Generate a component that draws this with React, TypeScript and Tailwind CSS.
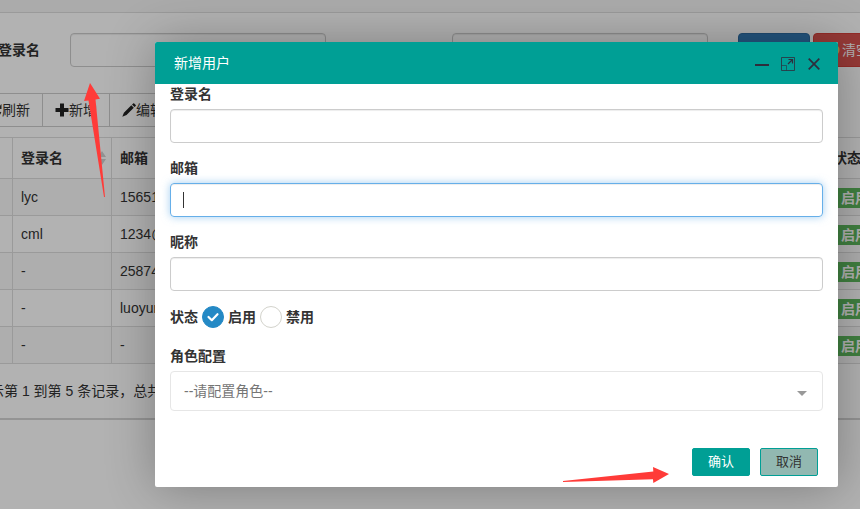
import type { ReactNode } from "react";

const rows = [
  { login: "lyc", email: "15651" },
  { login: "cml", email: "1234@" },
  { login: "-", email: "25874" },
  { login: "-", email: "luoyun" },
  { login: "-", email: "-" },
];

function ToolButton({ icon, children }: { icon: ReactNode; children: ReactNode }) {
  return (
    <button
      type="button"
      className="-ml-px flex h-[34px] items-center border border-[#ccc] bg-white px-3"
    >
      {icon}
      {children}
    </button>
  );
}

function SearchBox({ id }: { id: string }) {
  return (
    <input
      id={id}
      className="h-[34px] w-64 shrink-0 rounded border border-[#ccc] bg-white px-3 shadow-[inset_0_1px_1px_rgba(0,0,0,0.075)] outline-none"
    />
  );
}

function UserList() {
  return (
    <div className="-mr-16 -ml-6">
      <div className="h-[13px] border-b border-[#ddd] bg-[#f5f5f5]" />
      <div className="border-b-2 border-[#d4d4d4] bg-white pt-5">
        <form className="flex h-[34px] items-center pl-[22px]">
          <label htmlFor="q-login" className="w-[72px] shrink-0 font-bold">
            登录名
          </label>
          <SearchBox id="q-login" />
          <span className="w-[126px] shrink-0" />
          <SearchBox id="q-email" />
          <button
            type="button"
            className="ml-[30px] h-[34px] w-[72px] shrink-0 rounded border border-[#2e6da4] bg-[#337ab7] text-white"
          >
            搜索
          </button>
          <button
            type="button"
            className="ml-[3px] flex h-[34px] shrink-0 items-center gap-0.5 rounded border border-[#d43f3a] bg-[#d9534f] px-3 text-white"
          >
            <svg viewBox="0 0 14 14" className="size-3.5" aria-hidden="true">
              <circle cx="7" cy="7" r="5.5" fill="none" stroke="#f0c060" strokeWidth="2" />
            </svg>
            清空
          </button>
        </form>

        <div className="mt-[26px] flex">
          <ToolButton
            icon={
              <svg viewBox="0 0 14 14" className="size-3.5" aria-hidden="true">
                <path d="M12 4.5A5.5 5.5 0 1 0 12.4 9" fill="none" stroke="#333" strokeWidth="2" />
                <path d="M13.5 1v5h-5z" fill="#333" />
              </svg>
            }
          >
            刷新
          </ToolButton>
          <ToolButton
            icon={
              <svg viewBox="0 0 14 14" className="size-3.5" aria-hidden="true">
                <path d="M5 .5h4V5h4.500v4H9v4.500H5V9H.5V5H5z" fill="#222" />
              </svg>
            }
          >
            新增
          </ToolButton>
          <ToolButton
            icon={
              <svg viewBox="0 0 14 14" className="size-3.5" aria-hidden="true">
                <path
                  d="M11.200.4c.3-.3.700-.3 1 0l1.500 1.500c.3.3.3.700 0 1l-1.200 1.200-2.500-2.500zM9.300 2.300l2.500 2.500-7.300 7.300L.3 13.700l1.600-4z"
                  fill="#222"
                />
              </svg>
            }
          >
            编辑
          </ToolButton>
        </div>

        <table className="mt-2.5 w-full table-fixed border-collapse text-left">
          <thead>
            <tr className="h-[41px]">
              <th className="w-9 border border-[#ddd]" />
              <th className="w-[99px] border border-[#ddd] pr-1 pl-2">
                <span className="flex items-center justify-between">
                  登录名
                  <svg viewBox="0 0 10 16" className="h-4 w-2.5" aria-hidden="true">
                    <path d="M5 1 9 7H1zM1 9h8l-4 6z" fill="#d0d0d0" />
                  </svg>
                </span>
              </th>
              <th className="border border-[#ddd] px-2">邮箱</th>
              <th className="w-[99px] border border-[#ddd] px-2">状态</th>
            </tr>
          </thead>
          <tbody>
            {rows.map((row, i) => (
              <tr key={i} className="h-[37px] odd:bg-[#f9f9f9]">
                <td className="border border-[#ddd]" />
                <td className="border border-[#ddd] px-2">{row.login}</td>
                <td className="border border-[#ddd] px-2">{row.email}</td>
                <td className="border border-[#ddd] px-2">
                  <span className="inline-flex h-5 items-center bg-[#5cb85c] px-2 align-middle font-bold text-white">
                    启用
                  </span>
                </td>
              </tr>
            ))}
          </tbody>
        </table>

        <p className="flex h-[54px] items-center">显示第 1 到第 5 条记录，总共 5 条记录</p>
      </div>
    </div>
  );
}

function Field({ id, label, focused }: { id: string; label: string; focused?: boolean }) {
  return (
    <div className="mb-[15px]">
      <label htmlFor={id} className="mb-[5px] block font-bold">
        {label}
      </label>
      <div className="relative flex items-center">
        <input
          id={id}
          className={
            focused
              ? "h-[34px] w-full rounded border border-[#66afe9] px-3 shadow-[inset_0_1px_1px_rgba(0,0,0,0.075),0_0_8px_rgba(102,175,233,0.6)] outline-none"
              : "h-[34px] w-full rounded border border-[#ccc] px-3 shadow-[inset_0_1px_1px_rgba(0,0,0,0.075)] outline-none"
          }
        />
        {focused && <span className="absolute left-[13px] h-4 w-px bg-[#333]" />}
      </div>
    </div>
  );
}

function Choice({ label, checked }: { label: string; checked?: boolean }) {
  return (
    <label className="flex items-center gap-1 font-bold">
      <span className="relative flex">
        <input
          type="radio"
          name="status"
          defaultChecked={checked}
          className="size-[22px] appearance-none rounded-full border border-[#d3d3cc] bg-white checked:border-[#2489c5] checked:bg-[#2489c5]"
        />
        {checked && (
          <svg viewBox="0 0 22 22" className="absolute inset-0 size-[22px]" aria-hidden="true">
            <path
              d="m6.500 11 3.300 3.200 5.700-6"
              fill="none"
              stroke="#fff"
              strokeWidth="2.200"
              strokeLinecap="round"
              strokeLinejoin="round"
            />
          </svg>
        )}
      </span>
      {label}
    </label>
  );
}

function UserDialog() {
  return (
    <div
      role="dialog"
      aria-label="新增用户"
      className="absolute top-[42px] right-[22px] left-[155px] rounded-xs bg-white shadow-[1px_1px_50px_rgba(0,0,0,0.3)]"
    >
      <header className="flex h-[42px] items-center justify-between rounded-t-xs bg-[#009f95] pr-[17px] pl-[19px] text-white">
        <h2>新增用户</h2>
        <div className="flex items-center gap-3 pt-0.5">
          <button type="button" aria-label="最小化">
            <svg viewBox="0 0 14 14" className="size-3.5" aria-hidden="true">
              <path d="M0 7h14v2H0z" fill="#2e2d3c" />
            </svg>
          </button>
          <button type="button" aria-label="最大化">
            <svg viewBox="0 0 14 14" className="size-3.5" fill="none" stroke="#2e2d3c" aria-hidden="true">
              <path d="M.5.5h13v13H.5z" strokeOpacity="0.800" />
              <path d="M.5 8.500h5v5" strokeOpacity="0.600" />
              <path d="m7 7 4.500-4.500M7.500 2.500h4v4" strokeWidth="1.200" />
            </svg>
          </button>
          <button type="button" aria-label="关闭">
            <svg viewBox="0 0 14 14" className="size-3.5" aria-hidden="true">
              <path d="m1.700 1.700 10.600 10.600m0-10.600L1.700 12.300" stroke="#2e2d3c" strokeWidth="1.700" />
            </svg>
          </button>
        </div>
      </header>

      <form className="px-[15px]">
        <Field id="login" label="登录名" />
        <Field id="email" label="邮箱" focused />
        <Field id="nick" label="昵称" />

        <div className="mb-[18px] flex h-[22px] items-center gap-1">
          <span className="font-bold">状态</span>
          <Choice label="启用" checked />
          <Choice label="禁用" />
        </div>

        <label htmlFor="role" className="mb-[5px] block font-bold">
          角色配置
        </label>
        <div className="relative flex items-center">
          <select
            id="role"
            className="h-10 w-full appearance-none rounded border border-[#e6e6e6] bg-white px-[13px] text-[#757575] outline-none"
          >
            <option>--请配置角色--</option>
          </select>
          <svg viewBox="0 0 10 5" className="pointer-events-none absolute right-4 mt-1 h-[5px] w-2.5" aria-hidden="true">
            <path d="M0 0h10L5 5z" fill="#999" />
          </svg>
        </div>
      </form>

      <footer className="flex justify-end gap-2.5 px-5 pt-[37px] pb-[11px] text-[13px]">
        <button type="button" className="h-7 w-[58px] rounded-xs border border-[#009f95] bg-[#009f95] text-white">
          确认
        </button>
        <button type="button" className="h-7 w-[58px] rounded-xs border border-[#009f95] bg-[#92b8b1]">
          取消
        </button>
      </footer>
    </div>
  );
}

export default function App() {
  return (
    <div className="relative min-h-screen overflow-hidden bg-white font-['Liberation_Sans','Noto_Sans_CJK_SC',sans-serif] text-sm leading-5 text-[#333]">
      <UserList />
      <div className="absolute inset-0 bg-black/30" />
      <UserDialog />
      <svg viewBox="0 0 24 116" className="absolute top-[82px] left-[82px] h-[116px] w-6" aria-hidden="true">
        <path d="M8 1 2 19l4.500-.5L22 115h1L13.500 17.500l4.500-.8z" fill="#ff3b38" />
      </svg>
      <svg viewBox="0 0 108 18" className="absolute top-[466px] right-[190px] h-[18px] w-[108px]" aria-hidden="true">
        <path d="m107 8-16-7 .3 4.500L1 15v1l90-2.800.3 3.800z" fill="#ff3b38" />
      </svg>
    </div>
  );
}
